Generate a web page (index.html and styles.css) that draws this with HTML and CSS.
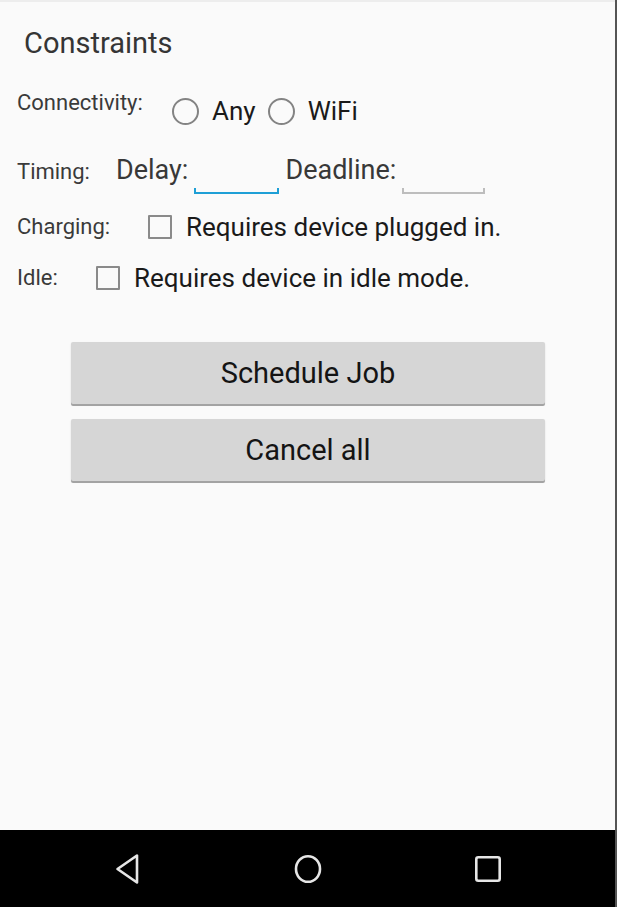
FILE: index.html
```html
<!DOCTYPE html>
<html lang="en">
<head>
<meta charset="utf-8">
<title>Constraints</title>
<link rel="stylesheet" href="styles.css">
</head>
<body>
<div class="device">
  <main class="content">
    <h1 class="title">Constraints</h1>

    <div class="row row-conn">
      <span class="label label-conn">Connectivity:</span>
      <div class="radios">
        <span class="radio"><span class="ring"></span><span class="opt">Any</span></span>
        <span class="radio"><span class="ring"></span><span class="opt">WiFi</span></span>
      </div>
    </div>

    <div class="row row-timing">
      <span class="label label-timing">Timing:</span>
      <span class="field-label">Delay:</span>
      <span class="edit edit-delay"></span>
      <span class="field-label field-deadline">Deadline:</span>
      <span class="edit edit-deadline"></span>
    </div>

    <div class="row row-check row-charging">
      <span class="label label-charging">Charging:</span>
      <span class="checkbox"></span>
      <span class="opt check-text">Requires device plugged in.</span>
    </div>

    <div class="row row-check row-idle">
      <span class="label label-idle">Idle:</span>
      <span class="checkbox"></span>
      <span class="opt check-text">Requires device in idle mode.</span>
    </div>

    <div class="buttons">
      <button class="btn" type="button">Schedule Job</button>
      <button class="btn" type="button">Cancel all</button>
    </div>
  </main>

  <nav class="navbar">
    <span class="nav-btn">
      <svg width="30" height="34" viewBox="0 0 30 34"><path d="M24 3.5 L24 30.5 L4.5 17 Z" fill="none" stroke="#e6e6e6" stroke-width="2.6" stroke-linejoin="round"/></svg>
    </span>
    <span class="nav-btn">
      <svg width="30" height="34" viewBox="0 0 30 34"><ellipse cx="15" cy="17" rx="12" ry="12.8" fill="none" stroke="#e6e6e6" stroke-width="2.6"/></svg>
    </span>
    <span class="nav-btn">
      <svg width="30" height="34" viewBox="0 0 30 34"><rect x="3.3" y="5.3" width="23.4" height="23.4" rx="2" fill="none" stroke="#e6e6e6" stroke-width="2.6"/></svg>
    </span>
  </nav>
</div>
</body>
</html>
```

FILE: styles.css
```css
* { box-sizing: border-box; }

html, body {
  margin: 0;
  padding: 0;
}

body {
  width: 617px;
  height: 907px;
  overflow: hidden;
  background: #fafafa;
  font-family: Roboto, "Noto Sans", "Liberation Sans", sans-serif;
}

.device {
  width: 617px;
  height: 907px;
  display: flex;
  flex-direction: column;
  border-right: 2px solid #555555;
}

.content {
  height: 830px;
  background: #fafafa;
  border-top: 2px solid #ededed;
  padding-left: 17px;
}

.title {
  margin: 25px 0 0 7px;
  font-size: 29px;
  line-height: 32px;
  font-weight: 400;
  color: #353535;
}

.row {
  display: flex;
}

.label {
  font-size: 22px;
  line-height: 26px;
  color: #3a3a3a;
  flex: none;
}

.row-conn {
  margin-top: 31px;
  align-items: flex-start;
}

.label-conn { width: 155px; }

.radios {
  display: flex;
  margin-top: 8px;
}

.radio {
  display: flex;
  align-items: center;
  height: 26px;
  margin-right: 12px;
}

.ring {
  width: 27px;
  height: 27px;
  border: 2px solid #838383;
  border-radius: 50%;
  margin-right: 13px;
  flex: none;
}

.opt {
  font-size: 26px;
  line-height: 26px;
  color: #1a1a1a;
}

.row-timing {
  margin-top: 31px;
  align-items: baseline;
}

.label-timing { width: 99px; }

.field-label {
  font-size: 27px;
  line-height: 30px;
  color: #383838;
}

.field-deadline { margin-left: 6px; }

.edit {
  align-self: flex-start;
  margin-top: 33px;
  height: 6px;
  border: 2px solid #bdbdbd;
  border-top: none;
}

.edit-delay {
  width: 85px;
  margin-left: 6px;
  border-color: #1e9fd6;
}

.edit-deadline {
  width: 83px;
  margin-left: 6px;
}

.row-check {
  align-items: center;
  height: 24px;
}

.row-check .label { line-height: 24px; }

.row-charging { margin-top: 21px; }
.row-idle { margin-top: 27px; }

.label-charging { width: 131px; }
.label-idle { width: 79px; }

.checkbox {
  width: 24px;
  height: 24px;
  border: 2px solid #8a8a8a;
  border-radius: 1px;
  flex: none;
  margin-right: 14px;
}

.check-text {
  font-size: 26px;
  line-height: 24px;
}

.buttons {
  margin: 52px 0 0 54px;
  display: flex;
  flex-direction: column;
  gap: 15px;
}

.btn {
  width: 474px;
  height: 62px;
  border: none;
  border-radius: 2px;
  background: #d6d6d6;
  box-shadow: 0 2px 0 #a3a3a3, 0 1px 2px rgba(0,0,0,0.12);
  font-family: Roboto, "Noto Sans", "Liberation Sans", sans-serif;
  font-size: 29px;
  color: #141414;
  padding: 0;
}

.navbar {
  height: 77px;
  background: #000;
  display: flex;
  align-items: center;
  padding-left: 113px;
  gap: 150px;
}

.nav-btn {
  display: flex;
  width: 30px;
  height: 34px;
}
```
